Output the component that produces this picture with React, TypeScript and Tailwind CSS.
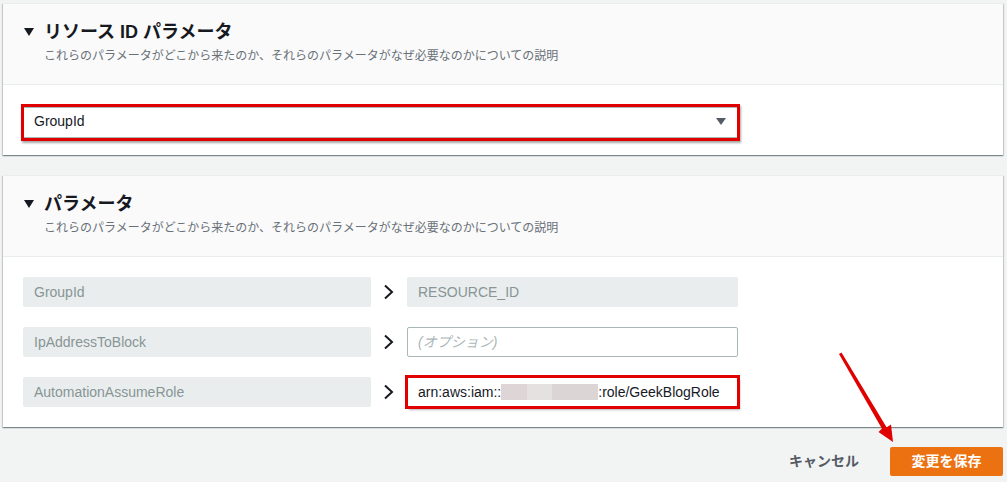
import React from "react";

const FONT = { fontFamily: '"Liberation Sans", "Noto Sans CJK JP", sans-serif' };

function Caret() {
  return (
    <svg width="10" height="8" viewBox="0 0 10 8" className="shrink-0">
      <polygon points="0,0 10,0 5,8" fill="#16191f" />
    </svg>
  );
}

function Chevron() {
  return (
    <svg width="12" height="16" viewBox="0 0 12 16">
      <polyline points="2,1.5 9,8 2,14.5" fill="none" stroke="#16191f" strokeWidth="2" />
    </svg>
  );
}

function Header({ title }: { title: string }) {
  return (
    <div className="h-[81px] bg-[#fafafa] border-b border-[#eaeded] pl-[21px] pt-[16px]">
      <div className="flex items-center h-[24px]">
        <Caret />
        <span className="ml-[10px] text-[18px] leading-[24px] font-bold text-[#16191f]">{title}</span>
      </div>
      <div className="ml-[20px] mt-[3px] text-[12px] leading-[18px] text-[#687078]">
        これらのパラメータがどこから来たのか、それらのパラメータがなぜ必要なのかについての説明
      </div>
    </div>
  );
}

const cardCls =
  "w-[1000px] bg-white border-t border-[#eaeded] shadow-[0_1px_1px_0_rgba(0,28,36,0.3),1px_1px_1px_0_rgba(0,28,36,0.15),-1px_1px_1px_0_rgba(0,28,36,0.15)]";

function Row({ name, right }: { name: string; right: React.ReactNode }) {
  return (
    <div className="flex items-center h-[30px]">
      <div className="w-[348px] h-[30px] rounded-[2px] bg-[#eaeded] pl-[11px] flex items-center text-[14px] text-[#879596]">
        {name}
      </div>
      <div className="w-[36px] flex justify-center">
        <Chevron />
      </div>
      {right}
    </div>
  );
}

export default function App() {
  return (
    <div
      className="relative w-[1007px] h-[482px] bg-[#f2f3f3] overflow-hidden pt-[3px] pl-[3px]"
      style={FONT}
    >
      {/* Card 1 */}
      <div className={cardCls}>
        <Header title="リソース ID パラメータ" />
        <div className="h-[70px] pl-[18px] pt-[19px]">
          <div className="w-[719px] h-[37px] border-[3px] border-[#e00000] shadow-[1px_2px_2px_rgba(0,0,0,0.35)]">
            <div className="h-full border-y border-[#aab7b8] bg-white flex items-center justify-between pl-[10px] pr-[11px] pb-[3px]">
              <span className="text-[14px] text-[#16191f]">GroupId</span>
              <svg width="10" height="7" viewBox="0 0 10 7">
                <polygon points="0,0 10,0 5,7" fill="#545b64" />
              </svg>
            </div>
          </div>
        </div>
      </div>

      {/* Card 2 */}
      <div className={cardCls + " mt-[20px]"}>
        <Header title="パラメータ" />
        <div className="pl-[20px] pt-[20px] pb-[20px] flex flex-col gap-[20px]">
          <Row
            name="GroupId"
            right={
              <div className="w-[331px] h-[30px] rounded-[2px] bg-[#eaeded] pl-[11px] flex items-center text-[14px] text-[#879596]">
                RESOURCE_ID
              </div>
            }
          />
          <Row
            name="IpAddressToBlock"
            right={
              <div className="w-[331px] h-[30px] rounded-[2px] bg-white border border-[#aab7b8] pl-[10px] flex items-center text-[14px] italic text-[#aab7b8]">
                (オプション)
              </div>
            }
          />
          <Row
            name="AutomationAssumeRole"
            right={
              <div className="w-[331px] h-[30px] bg-white outline-[3px] outline-solid outline-[#e00000] -outline-offset-[1px] pl-[11px] flex items-center text-[14px] text-[#16191f] shadow-[2px_3px_2px_rgba(0,0,0,0.3)]">
                <span>arn:aws:iam::</span>
                <span className="flex h-[16px]">
                  <span className="w-[26px] bg-[#ddd5d6]" />
                  <span className="w-[25px] bg-[#e6e1e1]" />
                  <span className="w-[46px] bg-[#dcd5d5]" />
                </span>
                <span>:role/GeekBlogRole</span>
              </div>
            }
          />
        </div>
      </div>

      {/* Footer */}
      <div className="flex justify-end items-center mt-[20px] pr-[2px] w-[1002px]">
        <span className="text-[14px] font-bold text-[#545b64] mr-[31px]">キャンセル</span>
        <div className="w-[113px] h-[29px] rounded-[2px] bg-[#ec7211] flex items-center justify-center text-[14px] font-bold text-white">
          変更を保存
        </div>
      </div>

      {/* annotation arrow */}
      <svg className="absolute left-0 top-0 pointer-events-none" width="1007" height="482">
        <polygon points="839,354 841.5,352.5 887,428 883,430.5" fill="#e00000" />
        <polygon points="893,442 878.5,432 882,428.5 884.8,428.3 888,426.5 891,424.5" fill="#e00000" />
      </svg>
    </div>
  );
}
